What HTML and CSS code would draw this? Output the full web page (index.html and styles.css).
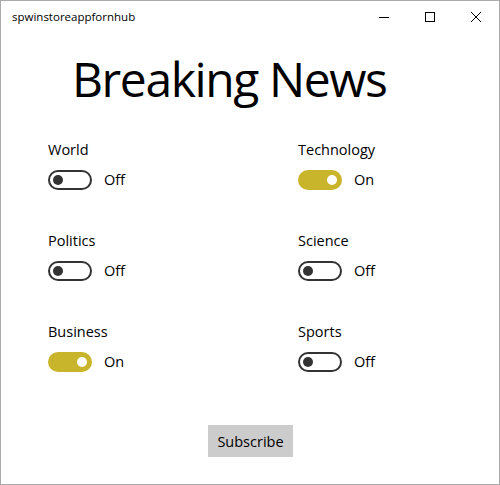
FILE: index.html
```html
<!DOCTYPE html>
<html lang="en">
<head>
<meta charset="utf-8">
<title>spwinstoreappfornhub</title>
<link rel="stylesheet" href="styles.css">
</head>
<body>
<div class="window">
  <div class="titlebar">
    <span class="app-name">spwinstoreappfornhub</span>
    <div class="caption">
      <span class="cap-btn"><svg width="10" height="10" viewBox="0 0 10 10"><path d="M0 5.5H10" stroke="#000" stroke-width="1"/></svg></span>
      <span class="cap-btn"><svg width="10" height="10" viewBox="0 0 10 10"><rect x="0.5" y="0.5" width="9" height="9" fill="none" stroke="#000" stroke-width="1"/></svg></span>
      <span class="cap-btn"><svg width="10" height="10" viewBox="0 0 10 10"><path d="M0 0L10 10M10 0L0 10" stroke="#000" stroke-width="1"/></svg></span>
    </div>
  </div>
  <div class="content">
    <h1 class="heading">Breaking News</h1>
    <div class="grid">
      <div class="item">
        <div class="label">World</div>
        <div class="switch-row"><span class="toggle"><span class="knob"></span></span><span class="state">Off</span></div>
      </div>
      <div class="item">
        <div class="label">Technology</div>
        <div class="switch-row"><span class="toggle on"><span class="knob"></span></span><span class="state">On</span></div>
      </div>
      <div class="item">
        <div class="label">Politics</div>
        <div class="switch-row"><span class="toggle"><span class="knob"></span></span><span class="state">Off</span></div>
      </div>
      <div class="item">
        <div class="label">Science</div>
        <div class="switch-row"><span class="toggle"><span class="knob"></span></span><span class="state">Off</span></div>
      </div>
      <div class="item">
        <div class="label">Business</div>
        <div class="switch-row"><span class="toggle on"><span class="knob"></span></span><span class="state">On</span></div>
      </div>
      <div class="item">
        <div class="label">Sports</div>
        <div class="switch-row"><span class="toggle"><span class="knob"></span></span><span class="state">Off</span></div>
      </div>
    </div>
    <div class="actions">
      <button class="subscribe">Subscribe</button>
    </div>
  </div>
</div>
</body>
</html>
```
FILE: styles.css
```css
html, body {
  margin: 0;
  padding: 0;
  background: #fff;
}
body {
  font-family: "Open Sans", "Noto Sans", sans-serif;
  color: #000;
}
.window {
  width: 500px;
  height: 485px;
  box-sizing: border-box;
  border: 1px solid #aaaaaa;
  display: flex;
  flex-direction: column;
  overflow: hidden;
}
.titlebar {
  height: 31px;
  display: flex;
  align-items: center;
}
.app-name {
  padding-left: 11px;
  font-size: 11.5px;
  flex: 1;
}
.caption {
  display: flex;
  height: 31px;
}
.cap-btn {
  width: 46px;
  display: flex;
  align-items: center;
  justify-content: center;
}
.content {
  display: flex;
  flex-direction: column;
}
.heading {
  margin: 15px 0 0 71px;
  font-weight: 400;
  font-size: 48px;
  line-height: 64px;
  letter-spacing: -1.4px;
}
.grid {
  display: grid;
  grid-template-columns: 250px 250px;
  row-gap: 41px;
  margin: 29px 0 0 47px;
}
.item {
  display: flex;
  flex-direction: column;
  gap: 10px;
}
.label {
  font-size: 14.5px;
  line-height: 20px;
}
.switch-row {
  display: flex;
  align-items: center;
  gap: 12px;
  height: 20px;
}
.toggle {
  width: 44px;
  height: 20px;
  box-sizing: border-box;
  border: 2px solid #333;
  border-radius: 10px;
  display: flex;
  align-items: center;
  padding: 0 3px;
}
.knob {
  width: 10px;
  height: 10px;
  border-radius: 50%;
  background: #333;
}
.toggle.on {
  background: #c9b52b;
  border-color: #c9b52b;
  justify-content: flex-end;
}
.toggle.on .knob {
  background: #fff;
}
.state {
  font-size: 14.5px;
  line-height: 20px;
}
.actions {
  display: flex;
  justify-content: center;
  margin-top: 53px;
  padding-left: 1px;
}
.subscribe {
  width: 85px;
  height: 32px;
  border: none;
  background: #cccccc;
  font-family: "Open Sans", "Noto Sans", sans-serif;
  font-size: 14.5px;
  color: #000;
  padding: 0;
}
```
